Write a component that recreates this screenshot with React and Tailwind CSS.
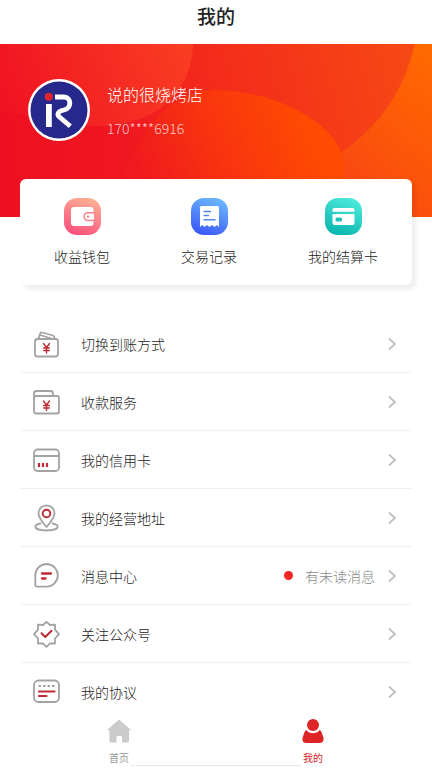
const shortcuts = [
  { label: "收益钱包", icon: WalletIcon },
  { label: "交易记录", icon: ReceiptIcon },
  { label: "我的结算卡", icon: BankCardIcon },
];

const menuItems = [
  { label: "切换到账方式", icon: TransferIcon },
  { label: "收款服务", icon: FolderIcon },
  { label: "我的信用卡", icon: CreditCardIcon },
  { label: "我的经营地址", icon: AddressIcon },
  { label: "消息中心", icon: MessageIcon, hint: "有未读消息" },
  { label: "关注公众号", icon: FollowIcon },
  { label: "我的协议", icon: AgreementIcon },
];

export default function App() {
  return (
    <div
      className="flex min-h-screen flex-col bg-white text-[#222222]"
      style={{ fontFamily: "'Noto Sans CJK SC', sans-serif" }}
    >
      <main className="flex-1">
        <header className="flex h-11 items-center justify-center pb-3">
          <h1 className="text-[19px] leading-6 font-medium">我的</h1>
        </header>

        {/* Profile banner */}
        <section className="relative h-[173px] overflow-hidden bg-[#ee1122]">
          <BannerArt />
          <div className="relative flex items-center gap-[17px] px-7 pt-[35px]">
            <Logo />
            <div className="flex flex-col gap-3 text-white">
              <p className="text-base leading-6 font-light">说的很烧烤店</p>
              <p className="text-sm leading-5 font-light text-white/75">170****6916</p>
            </div>
          </div>
        </section>

        {/* Shortcuts */}
        <nav className="relative mx-5 -mt-[38px] flex h-[106px] justify-between rounded-md bg-white px-[34px] pt-[19px] shadow-[4px_4px_5px_rgba(0,0,0,0.07)]">
          {shortcuts.map(({ label, icon: Icon }) => (
            <a key={label} href="#" className="flex flex-col items-center gap-[11px]">
              <Icon />
              <span className="text-sm leading-5 font-light">{label}</span>
            </a>
          ))}
        </nav>

        {/* Menu */}
        <ul className="mx-5 mt-[30px]">
          {menuItems.map(({ label, icon: Icon, hint }) => (
            <li key={label} className="border-b border-[#f1f1f1] last:border-b-0">
              <a href="#" className="flex h-[57px] items-center gap-[21px] pr-4 pl-3">
                <Icon />
                <span className="flex-1 text-sm leading-5 font-light">{label}</span>
                {hint && (
                  <span className="-mr-2 flex items-center gap-3 text-sm leading-5 font-light text-[#888888]">
                    <i className="size-[9px] rounded-full bg-[#f52626]" />
                    {hint}
                  </span>
                )}
                <svg width="8" height="12" viewBox="0 0 8 12" fill="none" stroke="#bdbdbd" strokeWidth="1.7">
                  <path d="M1 .5 7 6 1 11.5" />
                </svg>
              </a>
            </li>
          ))}
        </ul>
      </main>

      {/* Tab bar */}
      <nav className="sticky bottom-0 -mt-3 grid h-14 grid-cols-2 bg-white px-[22px] pt-[7px] text-[10px] leading-4">
        <a href="#" className="flex flex-col items-center gap-[7px] text-[#999999]">
          <svg width="24" height="24" viewBox="0 0 24 24" fill="#cbcbcb">
            <path d="M12 .5 23.5 10.4q.4 1.1-.9 1.1H22V22q0 1.5-1.5 1.5H15V18q0-1-1-1h-3.5q-1 0-1 1v5.5H4Q2.500 23.500 2.500 22V11.500h-1q-1.300 0-.9-1.100Z" />
          </svg>
          首页
        </a>
        <a href="#" className="flex flex-col items-center gap-[7px] text-[#d8232a]">
          <svg width="24" height="24" viewBox="0 0 24 24" fill="#dd2427">
            <circle cx="12" cy="6" r="6" />
            <path d="M5.300 10.900c3 4.300 10.400 4.300 13.400 0 .9.600 1.500 1.500 2 2.600l1.700 5.300c.8 2.700-.6 5.200-3.400 5.200H5c-2.800 0-4.200-2.500-3.400-5.200l1.700-5.300c.5-1.100 1.100-2 2-2.600Z" />
          </svg>
          我的
        </a>
        <span className="absolute bottom-0 left-[30%] h-[3px] w-2/5 rounded-t-sm border-t border-[#e8e8e8]" />
      </nav>
    </div>
  );
}

function BannerArt() {
  return (
    <svg className="absolute inset-0 size-full" viewBox="0 0 432 173" preserveAspectRatio="none">
      <defs>
        <linearGradient id="base" x1="0" y1="0" x2="1" y2="0">
          <stop offset="0" stopColor="#ee1022" />
          <stop offset=".4" stopColor="#f01a1e" />
          <stop offset=".75" stopColor="#f94812" />
          <stop offset="1" stopColor="#fb4f0c" />
        </linearGradient>
        <linearGradient id="corner" gradientUnits="userSpaceOnUse" x1="432" y1="0" x2="350" y2="130">
          <stop offset="0" stopColor="#ff6a00" />
          <stop offset="1" stopColor="#ff6a00" stopOpacity="0" />
        </linearGradient>
        <linearGradient id="big" gradientUnits="userSpaceOnUse" x1="120" y1="100" x2="410" y2="20">
          <stop offset="0" stopColor="#f01620" />
          <stop offset=".35" stopColor="#f32b1b" />
          <stop offset="1" stopColor="#f64814" />
        </linearGradient>
        <linearGradient id="left" gradientUnits="userSpaceOnUse" x1="20" y1="80" x2="190" y2="10">
          <stop offset="0" stopColor="#f01522" />
          <stop offset="1" stopColor="#f93d22" />
        </linearGradient>
        <linearGradient id="front" gradientUnits="userSpaceOnUse" x1="150" y1="150" x2="310" y2="80">
          <stop offset="0" stopColor="#f01a1e" />
          <stop offset=".45" stopColor="#f8330f" />
          <stop offset="1" stopColor="#ff4b02" />
        </linearGradient>
      </defs>
      <rect width="432" height="173" fill="url(#base)" />
      <rect width="432" height="173" fill="url(#corner)" />
      <circle cx="248" cy="-34" r="170" fill="url(#big)" />
      <path d="M0 0h193c-1 46-36 82-93 82-40 0-60-12-100-14Z" fill="url(#left)" />
      <path d="M325 173C350 138 346 112 336 98 318 72 272 47 216 46c-44 0-72 34-91 84l-10 43Z" fill="url(#front)" />
    </svg>
  );
}

function Logo() {
  return (
    <svg width="62" height="62" viewBox="0 0 62 62" className="shrink-0">
      <circle cx="31" cy="31" r="31" fill="#fff" />
      <circle cx="31" cy="31" r="28.500" fill="#26298b" />
      <circle cx="20.800" cy="17.700" r="4" fill="#e0242f" />
      <path d="M18 25h5.800V48H18Z" fill="#fff" />
      <path d="M27 18h9c7.500 0 8 11.500 0 13-6 1-7.500 4.300-4.500 7l10.800 9.300" fill="none" stroke="#fff" strokeWidth="4.800" />
    </svg>
  );
}

function Tile({ id, from, to, children }) {
  return (
    <svg width="37" height="37" viewBox="0 0 37 37">
      <defs>
        <linearGradient id={id} x1=".7" y1="0" x2=".3" y2="1">
          <stop offset="0" stopColor={from} />
          <stop offset="1" stopColor={to} />
        </linearGradient>
      </defs>
      <rect width="37" height="37" rx="13" fill={`url(#${id})`} />
      {children}
    </svg>
  );
}

function WalletIcon() {
  return (
    <Tile id="wallet" from="#ffb195" to="#fb4f7d">
      <rect x="7" y="9" width="22.500" height="19" rx="3" fill="#fff" />
      <path d="M30 14.700h-6a3.900 3.900 0 0 0 0 7.800h6" fill="#fff" stroke="#fb8089" strokeWidth="1.500" />
      <circle cx="24" cy="18.600" r="1.200" fill="#fb8089" />
    </Tile>
  );
}

function ReceiptIcon() {
  return (
    <Tile id="receipt" from="#6ab8ff" to="#3c58f6">
      <path d="M9 9.500Q9 8 10.500 8h16Q28 8 28 9.500V29l-2.200-2-2.300 2-2.500-2-2.500 2-2.500-2-2.500 2-2.300-2L9 29Z" fill="#fff" />
      <path d="M12.500 13.500H20M12.500 17.500H18M12.500 21.700H24.500" stroke="#4f86f4" strokeWidth="1.400" />
    </Tile>
  );
}

function BankCardIcon() {
  return (
    <Tile id="bankcard" from="#4ceadb" to="#0bb5ae">
      <path d="M7.500 13.700V12q0-2 2-2h18q2 0 2 2v1.700Z" fill="#fff" />
      <path d="M7.500 16h22v9q0 2-2 2h-18q-2 0-2-2Z" fill="#fff" />
      <rect x="10.500" y="19.500" width="6.500" height="4" rx="1.500" fill="#1fc2ba" />
    </Tile>
  );
}

function LineIcon({ children }) {
  return (
    <svg
      width="28"
      height="28"
      viewBox="0 0 28 28"
      fill="none"
      stroke="#a3a3a3"
      strokeWidth="1.800"
      strokeLinecap="round"
      strokeLinejoin="round"
      className="shrink-0"
    >
      {children}
    </svg>
  );
}

function TransferIcon() {
  return (
    <LineIcon>
      <rect x="3" y="9" width="23" height="17.500" rx="2.500" />
      <path d="M6.500 8.500 8.200 3.500q.5-1.500 2-1L21 5.500q1.500.5 1.500 3M8 5l11.500 3.500" />
      <path d="m11.500 13.500 3 4 3-4M14.500 17.500V23M11.700 18h5.600M11.700 20.500h5.600" stroke="#bf2a35" strokeWidth="1.400" />
    </LineIcon>
  );
}

function FolderIcon() {
  return (
    <LineIcon>
      <rect x="2" y="8" width="25" height="17.500" rx="2" />
      <path d="M2 10V5.500Q2 3 4.500 3h14Q21 3 21 5.500V8" />
      <path d="m11.500 13 3 4 3-4M14.500 17v5.500M11.700 17.500h5.600M11.700 20h5.600" stroke="#bf2a35" strokeWidth="1.400" />
    </LineIcon>
  );
}

function CreditCardIcon() {
  return (
    <LineIcon>
      <rect x="2" y="3.500" width="25" height="21.500" rx="3.500" />
      <path d="M2 10h25" />
      <path d="M7 17v4M11 17v4M15 17v4" stroke="#bf2a35" strokeWidth="2.200" strokeLinecap="butt" />
    </LineIcon>
  );
}

function AddressIcon() {
  return (
    <LineIcon>
      <path d="M14.500 23C10 18 6.500 14 6.500 9.300a8 8 0 0 1 16 0c0 4.700-3.500 8.700-8 13.700Z" />
      <path d="M8.500 19.500c-3 .6-5.200 1.500-5.200 3 0 2.400 5 4 11.200 4s11.200-1.600 11.200-4c0-1.500-2.200-2.400-5.200-3" />
      <circle cx="14.500" cy="9.500" r="3.800" stroke="#bf2a35" strokeWidth="1.900" />
    </LineIcon>
  );
}

function MessageIcon() {
  return (
    <LineIcon>
      <path d="M14.500 2a11.300 11.300 0 1 1 0 22.600H5q-1.700 0-1.700-1.700V13.300A11.300 11.300 0 0 1 14.500 2Z" />
      <path d="M10 11.500h9M10 16.500h3.500" stroke="#bf2a35" strokeWidth="2.300" />
    </LineIcon>
  );
}

function FollowIcon() {
  return (
    <LineIcon>
      <path d="m14.500 1.800 3.500 3.200 5-.3v5l4 4.500-4 4.300v5l-5-.2-3.500 3.500-3.500-3.500-5 .2v-5L2 14.200l4-4.500v-5l5 .3Z" />
      <path d="m9.500 13.300 3.800 3.700 6.200-6.200" stroke="#bf2a35" strokeWidth="2" />
    </LineIcon>
  );
}

function AgreementIcon() {
  return (
    <LineIcon>
      <rect x="2" y="2.500" width="25" height="21.500" rx="4.500" />
      <path d="M6.500 8h2.500M11 8h2.500M15.500 8H18M20 8h2.500" strokeLinecap="butt" />
      <path d="M7 13.500h15.500M7 18h7.500" stroke="#bf2a35" strokeWidth="2.200" />
    </LineIcon>
  );
}
